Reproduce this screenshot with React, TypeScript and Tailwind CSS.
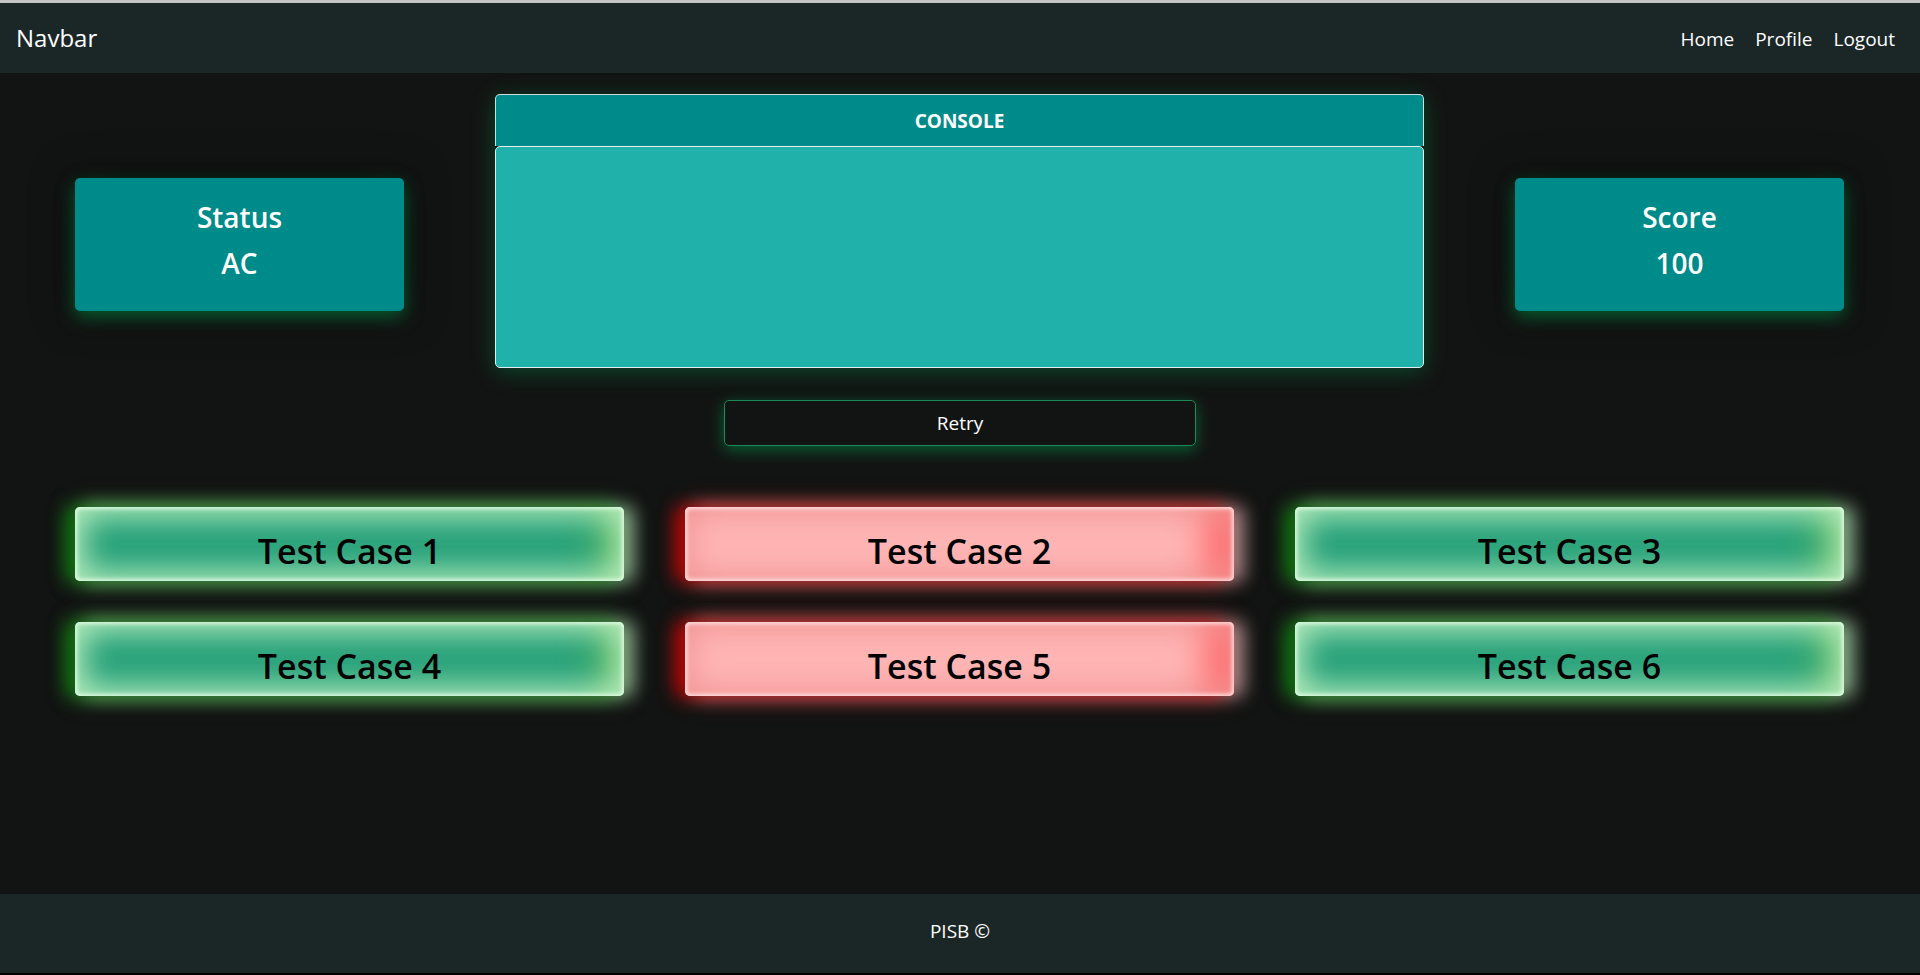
import React from "react";

const font = { fontFamily: '"Open Sans", "Noto Sans", "Liberation Sans", sans-serif' };

const greenCls =
  "bg-[#27a17a] shadow-[inset_0_0_4px_2px_rgba(235,255,235,0.85),inset_0_0_30px_10px_rgba(185,238,190,0.95),inset_-60px_0_36px_-34px_#52b25c,-10px_0_18px_#0a6a0a,10px_0_18px_rgba(220,255,220,0.55),0_0_24px_rgba(120,220,120,0.5)]";
const redCls =
  "bg-[#ffb6b6] shadow-[inset_0_0_4px_2px_rgba(255,235,235,0.85),inset_0_0_30px_8px_rgba(242,148,148,0.9),inset_-60px_0_36px_-34px_#ff5e5e,-10px_0_18px_#b00000,10px_0_18px_rgba(255,225,225,0.55),0_0_24px_rgba(230,90,90,0.5)]";

const cases = [
  { n: 1, ok: true },
  { n: 2, ok: false },
  { n: 3, ok: true },
  { n: 4, ok: true },
  { n: 5, ok: false },
  { n: 6, ok: true },
];

function InfoBox({ title, value }: { title: string; value: string }) {
  return (
    <div className="w-[329px] h-[133px] mt-[84px] rounded-[5px] bg-[#008b8b] flex flex-col items-center justify-center text-white text-[28px] font-semibold leading-[46px] pb-[9px] shadow-[0_6px_18px_rgba(0,170,80,0.5),0_0_40px_rgba(0,0,0,0.5)]">
      <div>{title}</div>
      <div>{value}</div>
    </div>
  );
}

export default function App() {
  return (
    <div className="w-full h-[975px] flex flex-col bg-[#121413]" style={font}>
      <div className="h-[3px] bg-[#c4c4c4]" />
      <nav className="h-[70px] bg-[#1b2627] flex items-center justify-between pl-[16px] pr-[25px]">
        <span className="text-white text-[24px] leading-none">Navbar</span>
        <div className="flex items-center gap-[21px] text-white text-[19px] leading-none pt-[2px]">
          <span>Home</span>
          <span>Profile</span>
          <span>Logout</span>
        </div>
      </nav>

      <main className="flex-1 flex flex-col pt-[21px]">
        <div className="flex items-start justify-between pl-[75px] pr-[76px]">
          <InfoBox title="Status" value="AC" />
          <div className="w-[929px] h-[274px] flex flex-col shadow-[0_4px_22px_rgba(0,170,90,0.35)] rounded-[5px]">
            <div className="h-[52px] bg-[#008b8b] border border-b-0 border-[#cfdede] rounded-t-[5px] flex items-center justify-center text-white font-bold text-[19px] pt-[2px]">
              CONSOLE
            </div>
            <div className="flex-1 bg-[#20b2aa] border border-[#e4eeee] rounded-[5px]" />
          </div>
          <InfoBox title="Score" value="100" />
        </div>

        <div className="flex justify-center mt-[32px]">
          <button className="w-[472px] h-[46px] rounded-[5px] border border-[#1c8a58] bg-[#121413] text-white text-[19px] shadow-[0_4px_16px_rgba(0,190,100,0.45)]">
            Retry
          </button>
        </div>

        <div className="grid grid-cols-3 gap-x-[61px] gap-y-[41px] pl-[75px] pr-[76px] mt-[61px]">
          {cases.map((c) => (
            <div
              key={c.n}
              className={`h-[74px] rounded-[5px] flex items-center justify-center pt-[14px] text-black text-[34px] font-semibold ${
                c.ok ? greenCls : redCls
              }`}
            >
              Test Case {c.n}
            </div>
          ))}
        </div>
      </main>

      <footer className="h-[79px] bg-[#1b2627] flex items-center justify-center text-white text-[19px] pb-[4px]">
        PISB ©
      </footer>
      <div className="h-[2px] bg-black" />
    </div>
  );
}
